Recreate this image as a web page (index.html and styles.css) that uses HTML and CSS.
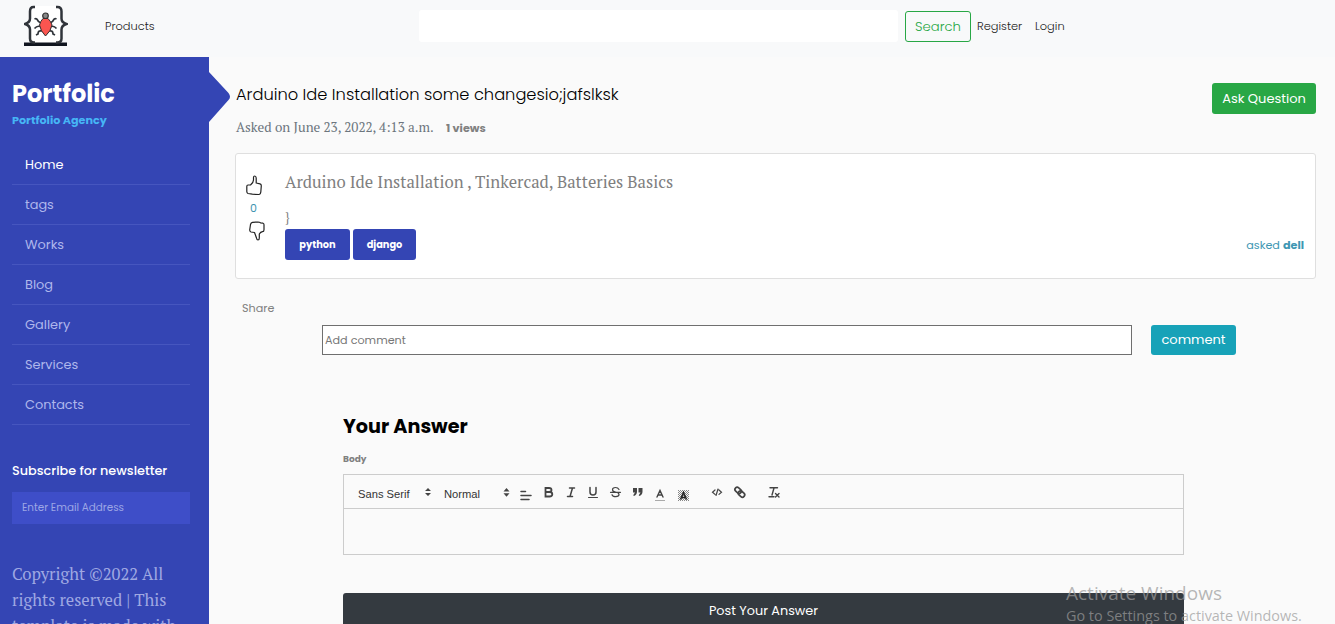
FILE: index.html
```html
<!DOCTYPE html>
<html lang="en">
<head>
<meta charset="utf-8">
<title>Arduino Ide Installation</title>
<link rel="stylesheet" href="styles.css">
</head>
<body>
<header class="topbar">
  <svg class="logo" viewBox="0 0 44 42" width="44" height="42">
    <rect x="7" y="1" width="30" height="37" fill="#fff"/>
    <rect x="0" y="37.500" width="43" height="3.500" fill="#10151f"/>
    <g fill="none" stroke="#30343a" stroke-width="2.500">
      <path d="M11 2H9.500Q6 2 6 6.500v7q0 4-5 5.500Q6 20.500 6 24.500v9q0 4 4 4h1"/>
      <path d="M32 2h1.500q4 0 4 4.500v7q0 4 5 5.500-5 1.500-5 5.500v9q0 4-4 4h-1.500"/>
      <path stroke-width="1.700" d="M17 18q-3-1-3.500-3-1-2-3-1M16 21.500q-3-1-5.500 2M18 26q-4-1-4 3l-2 1M26 18q3-1 3.500-3 1-2 3-1M27 21.500q3-1 5.500 2M25 26q4-1 4 3l2 1"/>
    </g>
    <circle cx="21.500" cy="10.800" r="2.800" fill="#888" stroke="#333" stroke-width="1.200"/>
    <path d="M19 13.500h5q3 3 4 6.500-1 6-6.500 11Q16.500 26 15.500 20q1-4 3.500-6.500z" fill="#fb5550" stroke="#333" stroke-width="1"/>
  </svg>
  <a class="products">Products</a>
  <div class="searchbox"></div>
  <button class="btn search">Search</button>
  <a class="register">Register</a>
  <a class="login">Login</a>
</header>
<div class="page">
  <aside class="sidebar">
    <svg class="pointer" width="22" height="50" viewBox="0 0 22 50"><path d="M0 0l19.500 21q3 4 0 7L0 50z" fill="#3445b4"/></svg>
    <h1 class="brand">Portfolic</h1>
    <div class="tagline">Portfolio Agency</div>
    <nav class="menu">
      <a class="active">Home</a>
      <a>tags</a>
      <a>Works</a>
      <a>Blog</a>
      <a>Gallery</a>
      <a>Services</a>
      <a>Contacts</a>
    </nav>
    <h3 class="subscribe">Subscribe for newsletter</h3>
    <div class="email"><span>Enter Email Address</span></div>
    <p class="copyright">Copyright ©2022 All<br>rights reserved | This<br>template is made with</p>
  </aside>
  <main class="main">
    <div class="heading">
      <h2 class="title">Arduino Ide Installation some changesio;jafslksk</h2>
      <button class="btn ask">Ask Question</button>
    </div>
    <div class="meta"><span class="asked-on">Asked on June 23, 2022, 4:13 a.m.</span><b class="views">1 views</b></div>
    <section class="card">
      <div class="votes">
        <svg class="up" width="16" height="21" viewBox="0 0 16 21" fill="none" stroke="#222" stroke-width="1.200" stroke-linejoin="round"><path d="M4.500 10Q7.500 7.500 7.500 5V2.500Q7.500 1 8.800 1 10 1 10.200 3v5l3.800.8q1.300.3 1.300 2l-.5 6.200q-.3 2.500-2 2.500l-6.500-.3L2 18.500Q.8 18 .8 16.500V11.500Q.8 10 2 10z"/></svg>
        <span class="count">0</span>
        <svg class="down" width="16" height="20" viewBox="0 0 16 20" fill="none" stroke="#222" stroke-width="1.200" stroke-linejoin="round"><path d="M5.500 11.500L2 11Q.7 10.500.7 9L1.500 3.500Q2 1.500 3.500 1.300L9 1q1.500 0 2.500.8l2.500.4q1 .3 1 1.500v5q0 2-1.500 2-2 .3-3.200 2.300V17q0 2-1.300 2-1.200 0-1.500-2z"/></svg>
      </div>
      <div class="post">
        <p class="post-text">Arduino Ide Installation , Tinkercad, Batteries Basics</p>
        <div class="brace">}</div>
        <div class="tags"><a class="tag t1">python</a><a class="tag t2">django</a></div>
      </div>
      <div class="author"><span>asked <b>dell</b></span></div>
    </section>
    <div class="share"><span>Share</span></div>
    <div class="comment-row"><div class="comment-input"><span>Add comment</span></div><button class="btn comment">comment</button></div>
    <section class="answer">
      <h2 class="answer-title">Your Answer</h2>
      <div class="body-label">Body</div>
      <div class="editor">
        <div class="toolbar">
          <span class="pick font">Sans Serif</span>
          <svg class="arrows a1" viewBox="0 0 8 10" width="8" height="10"><path d="M1 4L4 1l3 3zM1 6h6L4 9z" fill="#444"/></svg>
          <span class="pick size">Normal</span>
          <svg class="tools" width="290" height="33" viewBox="500 475 290 33">
            <g fill="none" stroke="#444" stroke-width="1.500" stroke-linecap="round">
              <path d="M521 491.500h4.500M521 495.500h10M521 499.500h8"/>
              <path d="M545.500 488h3.500q2.500 0 2.500 2t-2.500 2h-3.500zM545.500 492h4q2.800 0 2.800 2.200t-2.800 2.300h-4z" stroke-width="1.800"/>
              <path d="M569.500 488h5M567.500 496.500h5M572.500 488l-2.500 8.500"/>
              <path d="M590 487.500v4.500q0 3 3 3t3-3v-4.500"/>
              <path d="M588.500 497.500h9" stroke-width="1"/>
              <path d="M619 489.500q-1-2-3.500-2-3 0-3 2.200 0 1.800 3 2.300 3.500.6 3.500 2.600 0 2-3.300 2.100-3 0-3.700-2M610.500 492.300h10" stroke-width="1.200"/>
              <path d="M657 497l3-6.500 3 6.500M658 495h4" stroke-width="1.400"/>
              <path d="M715 490l-2.500 2.200 2.500 2.200M719 490l2.500 2.200-2.500 2.200M718 489l-2 6.500" stroke-width="1.200"/>
              <rect x="734.500" y="488" width="7" height="4.500" rx="2.200" transform="rotate(42 738 490.500)" stroke-width="1.700"/>
              <rect x="738" y="491.800" width="7" height="4.500" rx="2.200" transform="rotate(42 741.500 494)" stroke-width="1.700"/>
              <path d="M770 487.800h7.500M774 488l-2 7M769 496.800h5M775.500 493.500l3.500 3.500M779 493.500l-3.500 3.500" stroke-width="1.400"/>
            </g>
            <path d="M633 488h4v3.500q0 3-3 4.500l-.8-.8 1.800-2.700h-2zM638.500 488h4v3.500q0 3-3 4.500l-.8-.8 1.800-2.700h-2z" fill="#444"/>
            <path d="M655 500.500h10" stroke="#aaa"/>
            <path d="M678 490.500h11M678 492.500h11M678 494.500h11M678 496.500h11M678 498.500h11M678 500.500h11" stroke="#888" stroke-dasharray="1 1"/>
            <path d="M679 491.500h10M679 493.500h10M679 495.500h10M679 497.500h10M679 499.500h10" stroke="#888" stroke-dasharray="1 1"/>
            <path d="M680.500 499.500l3-7 3 7M681.500 497.500h4" stroke="#222" stroke-width="1.500" fill="none"/>
            <path d="M503.500 491.500l3-3.500 3 3.500zM503.500 493.200h6l-3 3.500z" fill="#444"/>
          </svg>
        </div>
        <div class="editor-body"></div>
      </div>
      <button class="btn post-answer">Post Your Answer</button>
    </section>
  </main>
</div>
<div class="watermark"><div class="w1">Activate Windows</div><div class="w2">Go to Settings to activate Windows.</div></div>
</body>
</html>
```
FILE: styles.css
```css
* { box-sizing: border-box; }
body { margin: 0; height: 624px; overflow: hidden; background: #fafafa; color: #808080; font-family: Poppins, Inter, sans-serif; }
h1, h2, h3, p { margin: 0; }
span, a, b { white-space: nowrap; }
.btn { font-family: inherit; border: 0; border-radius: 3px; padding: 0; color: #fff; font-size: 13px; white-space: nowrap; }
.topbar { height: 57px; background: #f8f9fa; display: flex; align-items: flex-start; font-size: 11.4px; font-weight: 300; line-height: 19px; color: #222; }
.logo { margin: 5px 0 0 24px; flex: none; }
.products { margin: 17px 0 0 37px; width: 314px; }
.searchbox { margin-top: 10px; width: 479px; height: 32px; background: #fff; border-radius: 3px; }
.search { margin: 11px 0 0 7px; width: 66px; height: 31px; border: 1px solid #28a745; color: #28a745; background: transparent; font-size: 13.2px; font-weight: 300; }
.register { margin: 17px 0 0 6px; width: 58px; }
.login { margin-top: 17px; }
.page { display: flex; height: 567px; }
.sidebar { position: relative; width: 209px; flex: none; background: #3445b4; padding: 20px 19px 0 12px; }
.pointer { position: absolute; left: 209px; top: 15px; z-index: 1; }
.brand { font-size: 24px; line-height: 34px; font-weight: 700; color: #fff; }
.tagline { font-size: 11.2px; line-height: 18px; font-weight: 700; color: #46b5f5; }
.menu { display: flex; flex-direction: column; margin-top: 16px; }
.menu a { height: 40px; padding: 0 13px; font-size: 12.9px; line-height: 40px; color: #afb7ec; border-bottom: 1px solid #4656bf; }
.menu .active { color: #fff; }
.subscribe { margin-top: 36px; font-size: 12.8px; line-height: 20px; font-weight: 500; color: #fff; white-space: nowrap; }
.email { margin-top: 11px; height: 32px; padding-left: 10px; background: #3e4ec8; font-size: 10.4px; line-height: 31px; color: #9da6e5; }
.copyright { margin-top: 37px; font-family: "PT Serif", "Liberation Serif", serif; font-size: 16.67px; line-height: 26px; color: #9fa8e2; white-space: nowrap; }
.main { flex: 1; padding: 26px 19px 0 26px; }
.heading { display: flex; justify-content: space-between; height: 31px; }
.title { margin-left: 1px; font-size: 16.25px; line-height: 23px; font-weight: 300; color: #000; white-space: nowrap; }
.ask { width: 104px; height: 31px; background: #28a745; }
.meta { display: flex; margin: 4px 0 0 1px; height: 20px; line-height: 20px; }
.asked-on { width: 210px; font-family: "PT Serif", "Liberation Serif", serif; font-size: 13.33px; line-height: 19px; color: #6c757d; }
.views { font-size: 11.2px; }
.card { display: flex; margin-top: 15px; height: 126px; background: #fff; border: 1px solid #dfdfdf; border-radius: 3px; }
.votes { width: 49px; padding: 21px 0 0 10px; display: flex; flex-direction: column; }
.count { margin-left: 4px; height: 25px; font-size: 11px; line-height: 24px; color: #3e93b0; }
.down { margin-left: 3px; }
.post { flex: 1; }
.post-text { margin-top: 15px; font-family: "PT Serif", "Liberation Serif", serif; font-size: 16.67px; line-height: 27px; white-space: nowrap; }
.brace { margin-top: 12px; height: 21px; font-family: "PT Serif", "Liberation Serif", serif; font-size: 13px; line-height: 19px; }
.tags { display: flex; gap: 3px; }
.tag { height: 31px; border-radius: 3px; background: #3445b4; color: #fff; font-size: 9.8px; font-weight: 700; line-height: 31px; text-align: center; }
.t1 { width: 65px; }
.t2 { width: 63px; }
.author { margin: 82px 11px 0 0; font-size: 11.2px; line-height: 18px; color: #3e97b3; }
.share { margin: 19px 0 0 7px; font-size: 11.2px; line-height: 20px; height: 27px; }
.comment-row { display: flex; margin-left: 87px; gap: 19px; }
.comment-input { width: 810px; height: 30px; border: 1px solid #6f6f6f; background: #fff; padding-left: 2px; font-size: 11.2px; line-height: 28px; color: #777; }
.comment { width: 85px; height: 30px; background: #17a2b8; }
.answer { margin: 56px 0 0 108px; width: 841px; }
.answer-title { font-size: 19.2px; line-height: 31px; font-weight: 700; color: #000; }
.body-label { margin-top: 8px; font-size: 9px; line-height: 18px; font-weight: 700; }
.editor { margin-top: 6px; height: 81px; border: 1px solid #ccc; }
.toolbar { height: 34px; border-bottom: 1px solid #ccc; display: flex; color: #333; font: 11.2px/38px "Liberation Sans", sans-serif; }
.font { margin-left: 14px; width: 66px; }
.a1 { margin-top: 12px; }
.size { margin-left: 12px; width: 56px; }
.tools { flex: none; }
.post-answer { margin-top: 38px; width: 841px; height: 36px; background: #343a40; display: block; font-size: 12.8px; }
.watermark { position: absolute; left: 1066px; top: 581px; font-family: "Open Sans", sans-serif; color: rgba(155, 155, 155, .72); white-space: nowrap; }
.w1 { font-size: 19px; line-height: 25px; }
.w2 { font-size: 14.4px; line-height: 20px; }
```
